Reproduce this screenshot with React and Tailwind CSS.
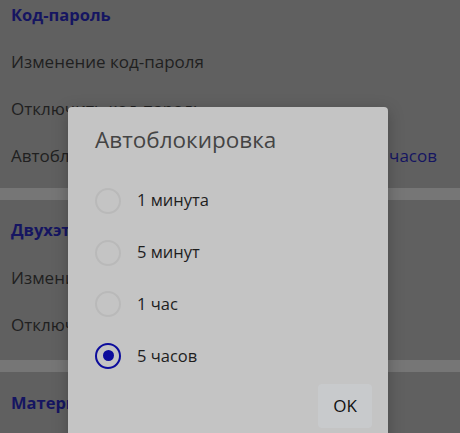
import React, { useState } from "react";

const options = ["1 минута", "5 минут", "1 час", "5 часов"];

const Row = ({ children, right }) => (
  <div className="h-[47px] pl-[11px] pr-[23px] flex items-center justify-between text-[17px] text-[#202020]">
    <span>{children}</span>
    {right && <span className="text-[#151561]">{right}</span>}
  </div>
);

const Header = ({ children }) => (
  <div className="h-[31px] px-[11px] flex items-center text-[16.5px] font-bold text-[#151561]">
    {children}
  </div>
);

const App = () => {
  const [selected, setSelected] = useState(3);

  return (
    <div
      className="relative w-[460px] h-[433px] overflow-hidden bg-[#606060]"
      style={{ fontFamily: '"Open Sans", sans-serif' }}
    >
      {/* settings list under the overlay */}
      <div>
        <div className="mb-[7px]">
          <Header>Код-пароль</Header>
        </div>
        <Row>Изменение код-пароля</Row>
        <Row>Отключить код-пароль</Row>
        <Row right="5 часов">Автоблокировка</Row>
        <div className="h-[12px] bg-[#767676] mt-[9px]" />
        <div className="pt-[15px] mb-[8px]">
          <Header>Двухэтапная аутентификация</Header>
        </div>
        <Row>Изменить пароль</Row>
        <Row>Отключить пароль</Row>
        <div className="h-[12px] bg-[#767676] mt-[12px]" />
        <div className="pt-[16px]">
          <Header>Материалы</Header>
        </div>
      </div>

      {/* dialog */}
      <div className="absolute left-[68px] top-[107px] w-[320px] h-[340px] bg-[#c4c4c4] rounded-[4px] shadow-[0_4px_16px_rgba(0,0,0,0.25)]">
        <div className="pl-[27px] pt-[18px] text-[22.5px] text-[#444444] leading-[30px]">
          Автоблокировка
        </div>
        <div className="mt-[20px]">
          {options.map((opt, i) => (
            <button
              key={opt}
              onClick={() => setSelected(i)}
              className="w-full h-[51.7px] flex items-center pl-[27px] text-left"
            >
              <span
                className={
                  i === selected
                    ? "w-[26px] h-[26px] rounded-full border-2 border-[#0c0c9c] flex items-center justify-center"
                    : "w-[26px] h-[26px] rounded-full border-2 border-[#b9b9b9]"
                }
              >
                {i === selected && (
                  <span className="w-[11px] h-[11px] rounded-full bg-[#0c0c9c]" />
                )}
              </span>
              <span className="ml-[16px] text-[16.5px] text-[#1e1e1e]">{opt}</span>
            </button>
          ))}
        </div>
        <div className="flex justify-end pr-[16px] mt-[2px]">
          <button className="w-[54px] h-[44px] rounded-[4px] bg-[#c8cacc] text-[17px] text-[#111111]">
            OK
          </button>
        </div>
      </div>
    </div>
  );
};

export default App;
